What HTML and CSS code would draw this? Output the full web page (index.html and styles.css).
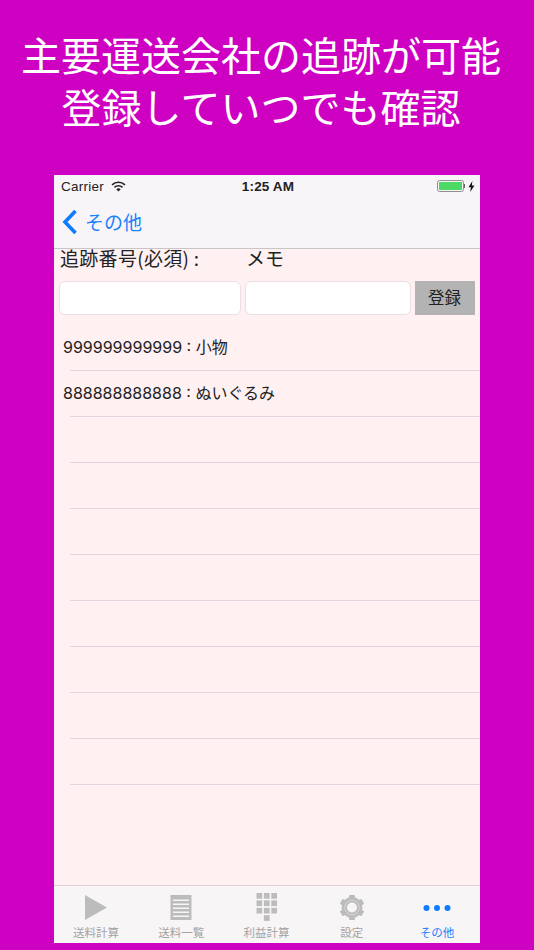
FILE: index.html
```html
<!DOCTYPE html>
<html lang="ja">
<head>
<meta charset="utf-8">
<title>追跡</title>
<link rel="stylesheet" href="styles.css">
</head>
<body>
<header class="promo">
  <p>主要運送会社の追跡が可能</p>
  <p>登録していつでも確認</p>
</header>
<main class="phone">
  <div class="status">
    <div class="status-left">
      <span class="carrier">Carrier</span>
      <svg class="wifi" viewBox="0 0 16 12" width="15" height="11"><path d="M1 4.200a10 10 0 0 1 14 0" fill="none" stroke="#222" stroke-width="1.800"/><path d="M3.600 6.900a6.400 6.400 0 0 1 8.800 0" fill="none" stroke="#222" stroke-width="1.800"/><path d="M8 11.500 5.600 9a3.400 3.400 0 0 1 4.800 0z" fill="#222"/></svg>
    </div>
    <span class="time">1:25 AM</span>
    <div class="status-right">
      <span class="battery"><span class="battery-fill"></span></span>
      <span class="battery-tip"></span>
      <svg class="bolt" viewBox="0 0 6 10" width="7" height="11"><path d="M3.800 0 0.300 5.600h2.200L1.800 10l3.900-6H3.300z" fill="#111"/></svg>
    </div>
  </div>
  <nav class="navbar">
    <svg class="chev" viewBox="0 0 16 26" width="16" height="26"><path d="M13.500 2 3 13l10.500 11" fill="none" stroke="#0f7bff" stroke-width="3.600"/></svg>
    <span class="back">その他</span>
  </nav>
  <section class="content">
    <div class="labels"><span class="label-a">追跡番号(必須) :</span><span>メモ</span></div>
    <form class="form">
      <input class="input input-a" type="text">
      <input class="input input-b" type="text">
      <button class="btn" type="button">登録</button>
    </form>
    <ul class="list">
      <li>999999999999 : 小物</li>
      <li>888888888888 : ぬいぐるみ</li>
      <li></li><li></li><li></li><li></li><li></li><li></li><li></li><li></li>
    </ul>
  </section>
  <footer class="tabbar">
    <div class="tab">
      <svg viewBox="0 0 30 30" width="30" height="30"><path d="M4 2v25L26 14.500z" fill="#bcbcbc"/></svg>
      <span>送料計算</span>
    </div>
    <div class="tab">
      <svg viewBox="0 0 30 30" width="30" height="30"><path fill="#bcbcbc" fill-rule="evenodd" d="M4.500 2h21v25h-21zM7 6.500V8h16V6.500zm0 4V12h16v-1.500zm0 4V16h16v-1.500zm0 4V20h16v-1.500zm0 4V24h16v-1.500z"/></svg>
      <span>送料一覧</span>
    </div>
    <div class="tab">
      <svg viewBox="0 0 30 30" width="30" height="30"><g fill="#bcbcbc"><rect x="5.500" y="0" width="5.700" height="5.700"/><rect x="12.900" y="0" width="5.700" height="5.700"/><rect x="20.300" y="0" width="5.700" height="5.700"/><rect x="5.500" y="7.400" width="5.700" height="5.700"/><rect x="12.900" y="7.400" width="5.700" height="5.700"/><rect x="20.300" y="7.400" width="5.700" height="5.700"/><rect x="5.500" y="14.800" width="5.700" height="5.700"/><rect x="12.900" y="14.800" width="5.700" height="5.700"/><rect x="20.300" y="14.800" width="5.700" height="5.700"/><rect x="12.900" y="22.200" width="5.700" height="5.700"/></g></svg>
      <span>利益計算</span>
    </div>
    <div class="tab">
      <svg viewBox="0 0 30 30" width="30" height="30"><g transform="translate(0 -.500)" fill="#bcbcbc"><path fill-rule="evenodd" d="M15 4.500a10.500 10.500 0 1 0 0 21 10.500 10.500 0 0 0 0-21zm0 5.500a5 5 0 1 1 0 10 5 5 0 0 1 0-10z"/><g id="teeth"><rect x="12" y="2.500" width="6" height="4" rx="1"/><rect x="12" y="23.500" width="6" height="4" rx="1"/></g><g transform="rotate(60 15 15)"><rect x="12" y="2.500" width="6" height="4" rx="1"/><rect x="12" y="23.500" width="6" height="4" rx="1"/></g><g transform="rotate(120 15 15)"><rect x="12" y="2.500" width="6" height="4" rx="1"/><rect x="12" y="23.500" width="6" height="4" rx="1"/></g><circle cx="15" cy="15" r="7.300" fill="none" stroke="#d8d6d8" stroke-width="1"/></g></svg>
      <span>設定</span>
    </div>
    <div class="tab tab-active">
      <svg viewBox="0 0 30 30" width="30" height="30"><g fill="#0f7bff"><circle cx="4.500" cy="15" r="3"/><circle cx="15" cy="15" r="3"/><circle cx="25.500" cy="15" r="3"/></g></svg>
      <span>その他</span>
    </div>
  </footer>
</main>
</body>
</html>
```
FILE: styles.css
```css
* { box-sizing: border-box; }
html, body { margin: 0; padding: 0; }
body {
  width: 534px;
  height: 950px;
  overflow: hidden;
  background: #ce00c2;
  font-family: "Liberation Sans", "Noto Sans CJK JP", sans-serif;
  color: #222;
}
.promo {
  height: 175px;
  padding: 28px 12px 0 0;
  color: #fff;
  text-align: center;
  font-family: "Noto Sans CJK JP", sans-serif;
  font-weight: 400;
  font-size: 40px;
  line-height: 52px;
}
.promo p { margin: 0; white-space: nowrap; }
.phone {
  width: 426px;
  height: 768px;
  margin-left: 54px;
  display: flex;
  flex-direction: column;
  background: #fff0f2;
}
.status {
  height: 22px;
  flex: none;
  background: #f8f5f8;
  display: grid;
  grid-template-columns: 1fr auto 1fr;
  align-items: center;
  padding: 0 5px 0 7px;
  font-size: 13.500px;
  color: #222;
}
.status-left { display: flex; align-items: center; gap: 7px; }
.carrier { letter-spacing: .25px; }
.wifi { margin-top: 0; }
.time { font-weight: 700; font-size: 13.500px; letter-spacing: .15px; }
.status-right { display: flex; align-items: center; justify-content: flex-end; }
.battery {
  width: 27px;
  height: 12px;
  border: 1px solid #8f8f8f;
  border-radius: 2.500px;
  padding: 1px;
  display: block;
}
.battery-fill { display: block; height: 100%; background: #4cd964; }
.battery-tip { width: 1.500px; height: 4px; background: #666; margin-right: 3px; }
.navbar {
  height: 52px;
  flex: none;
  background: #f8f5f8;
  border-bottom: 1px solid #c9c6c9;
  display: flex;
  align-items: center;
  gap: 7px;
  padding: 0 0 2px 8px;
  color: #1a82fb;
  font-family: "Noto Sans CJK JP", sans-serif;
  font-size: 19px;
}
.back { line-height: 26px; }
.content { flex: 1; min-height: 0; }
.labels {
  display: flex;
  padding-left: 6px;
  height: 32px;
  align-items: flex-start;
  font-family: "Noto Sans CJK JP", sans-serif;
  font-size: 19px;
  line-height: 18px;
  color: #222;
}
.label-a { width: 186px; white-space: nowrap; letter-spacing: .3px; }
.form { display: flex; padding-left: 5px; height: 34px; }
.input {
  height: 34px;
  margin: 0;
  padding: 0;
  background: #fff;
  border: 1px solid #eeddE4;
  border-radius: 6px;
}
.input-a { width: 182px; margin-right: 4px; }
.input-b { width: 166px; margin-right: 4px; }
.btn {
  width: 60px;
  height: 34px;
  padding: 0 1px 2px 0;
  background: #b3b3b3;
  border: 0;
  color: #222;
  font-family: "Noto Sans CJK JP", sans-serif;
  font-size: 16.500px;
}
.list { list-style: none; margin: 10px 0 0; padding: 0; }
.list li {
  height: 46px;
  padding: 0 0 0 9px;
  font-family: Inter, "Noto Sans CJK JP", sans-serif;
  font-size: 16px;
  line-height: 44px;
  color: #222;
  position: relative;
  white-space: nowrap;
}
.list li::after {
  content: "";
  position: absolute;
  left: 16px;
  right: 0;
  bottom: 0;
  height: 1px;
  background: #e2d5e0;
}
.tabbar {
  height: 58px;
  flex: none;
  background: #f8f5f7;
  border-top: 1px solid #e2cdd6;
  display: grid;
  grid-template-columns: repeat(5, 1fr);
  padding: 0 0 1px;
}
.tab {
  display: flex;
  flex-direction: column;
  align-items: center;
  padding-top: 7px;
  color: #a3a3a3;
  font-family: "Noto Sans CJK JP", sans-serif;
  font-size: 11.500px;
  line-height: 13px;
}
.tab svg { margin-left: -1px; }
.tab span { margin-top: 3px; margin-left: -1px; }
.tab-active { color: #1a82fb; }
```
